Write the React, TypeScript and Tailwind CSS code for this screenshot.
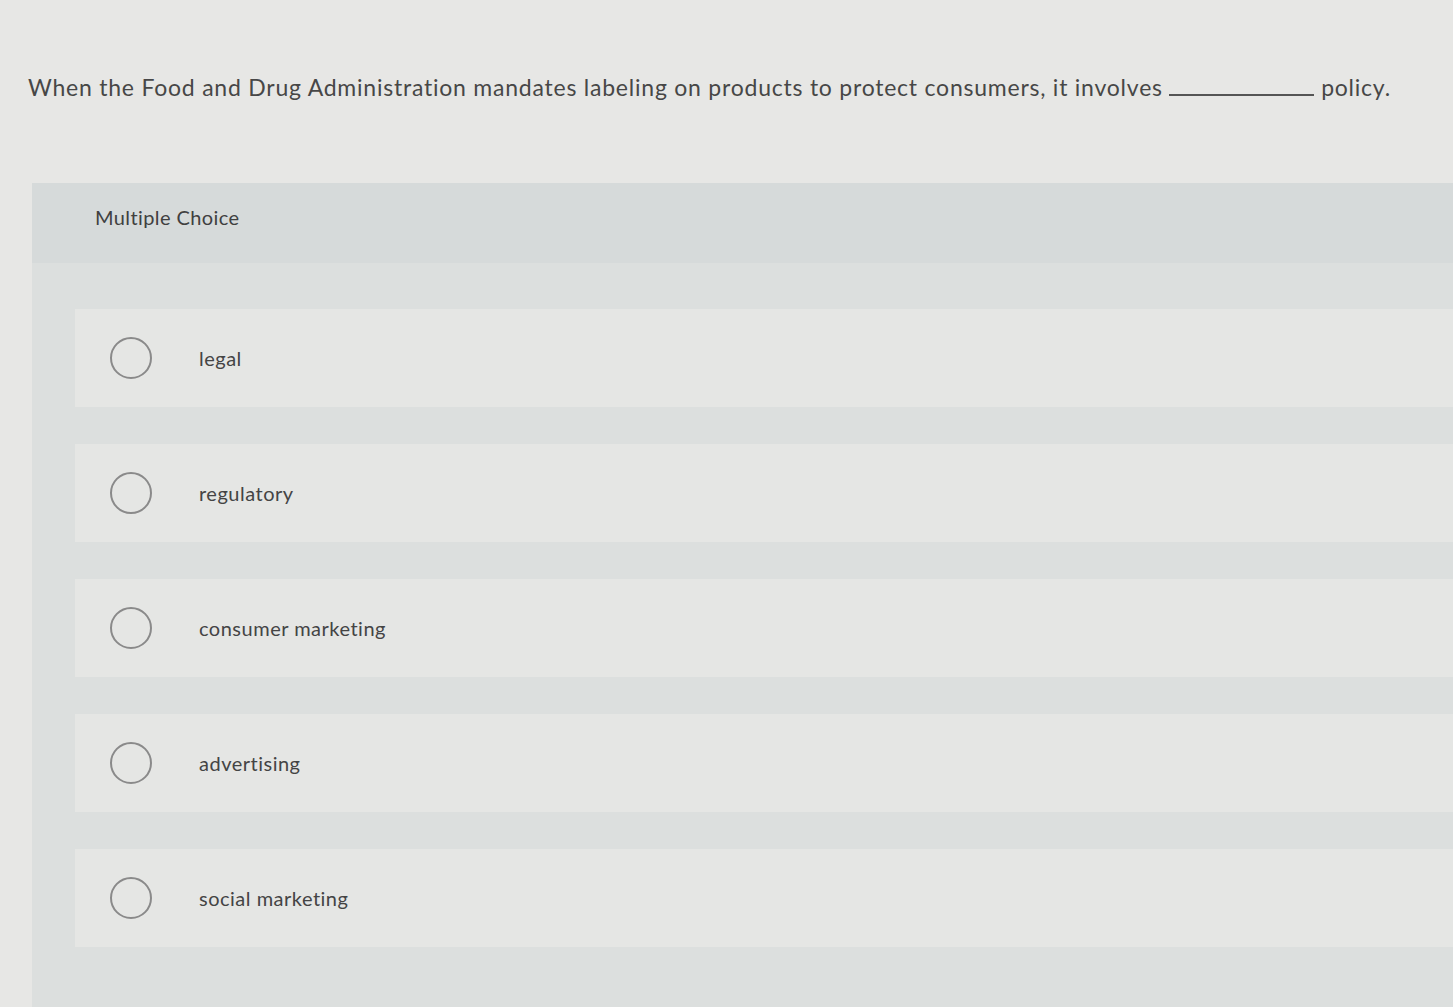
import React from "react";

const options = ["legal", "regulatory", "consumer marketing", "advertising", "social marketing"];

export default function App() {
  return (
    <div
      className="min-h-screen w-full bg-[#e7e7e5] text-[#474747] overflow-hidden"
      style={{ fontFamily: "Lato, 'Open Sans', sans-serif" }}
    >
      <div className="pt-[70px] pl-[28px] h-[183px]">
        <p className="text-[23px] leading-[34px] tracking-[0.77px] whitespace-nowrap">
          When the Food and Drug Administration mandates labeling on products to protect consumers, it involves{" "}
          <span className="inline-block w-[145px] border-b-2 border-[#555] align-baseline"></span>{" "}
          policy.
        </p>
      </div>

      <div className="ml-[32px] bg-[#dcdfde] min-h-[824px]">
        <div className="h-[80px] bg-[#d6dada] pl-[63px] pt-[19px]">
          <h2 className="text-[20px] leading-[30px] tracking-[0.4px] text-[#404040]">Multiple Choice</h2>
        </div>

        <div className="pl-[43px] pt-[46px] flex flex-col gap-[37px]">
          {options.map((opt) => (
            <div key={opt} className="h-[98px] bg-[#e5e6e4] flex items-center">
              <span className="ml-[35px] w-[42px] h-[42px] rounded-full border-2 border-[#8a8a8a] shrink-0" />
              <span className="ml-[47px] text-[20px] tracking-[0.5px] text-[#444]">{opt}</span>
            </div>
          ))}
        </div>
      </div>
    </div>
  );
}
